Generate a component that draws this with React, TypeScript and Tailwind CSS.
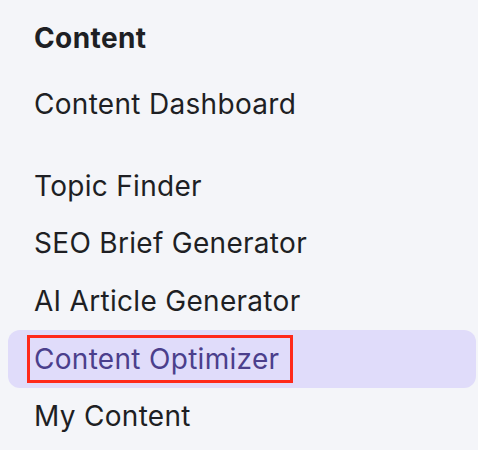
const items = [
  { label: 'Topic Finder' },
  { label: 'SEO Brief Generator' },
  { label: 'AI Article Generator' },
  { label: 'Content Optimizer', active: true },
  { label: 'My Content' },
];

export default function App() {
  return (
    <div className="w-[478px] h-[450px] overflow-hidden bg-[#f4f5f9] font-['Inter',sans-serif] text-[#1e1f24]">
      <div className="pt-[19px]">
        <div className="h-[38px] flex items-center pl-[34px] text-[28px] font-bold tracking-[0.4px]">Content</div>
        <div className="mt-[18px] h-[58px] flex items-center pl-[34px] text-[28px] tracking-[0.3px]">Content Dashboard</div>
        <div className="mt-[24px] flex flex-col text-[28px] tracking-[0.3px]">
          {items.map((item) =>
            item.active ? (
              <div
                key={item.label}
                className="ml-[8px] mr-[2px] h-[58px] flex items-center pl-[26px] rounded-[12px] bg-[#e0dcfa] text-[#4b3f8c]"
              >
                <span className="relative">
                  {item.label}
                  <span className="absolute left-[-7px] right-[-14px] top-1/2 -translate-y-1/2 h-[48px] border-[3px] border-[#ff2a1a]" />
                </span>
              </div>
            ) : (
              <div key={item.label} className="h-[57.5px] flex items-center pl-[34px]">
                {item.label}
              </div>
            )
          )}
        </div>
      </div>
    </div>
  );
}
